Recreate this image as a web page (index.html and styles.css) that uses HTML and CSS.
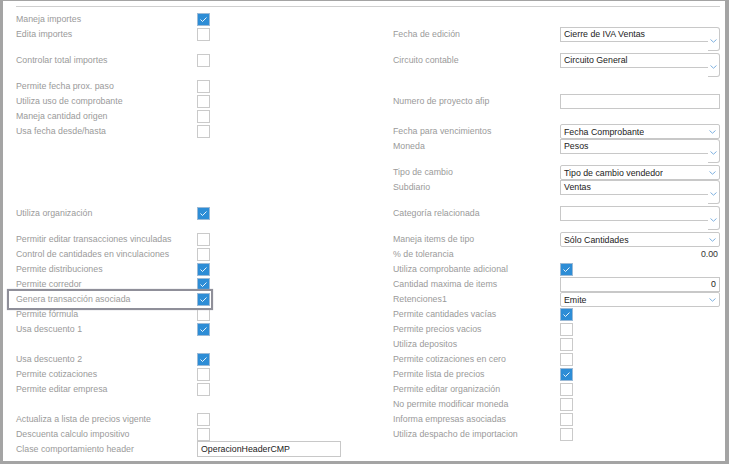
FILE: index.html
```html
<!DOCTYPE html>
<html lang="es">
<head>
    <meta charset="UTF-8">
    <meta name="viewport" content="width=device-width, initial-scale=1.0">
    <title>Configuración de transacción</title>
    <link rel="stylesheet" href="styles.css">
</head>
<body>

<div class="frame">
    <div class="rule"></div>

    <div class="form">
        <div class="row">
            <span class="label">Maneja importes</span><span class="check on"><svg viewBox="0 0 11 11"><polyline points="2.5,5.5 4.5,7.5 8.5,3.5"/></svg></span>
            <span></span><span></span>
        </div>
        <div class="row tall">
            <span class="label">Edita importes</span><span class="check"></span>
            <span class="label">Fecha de edición</span>
            <div class="combo"><span class="value">Cierre de IVA Ventas</span><span class="btn"><svg viewBox="0 0 7 4"><polyline points="0.5,0.5 3.5,3.2 6.5,0.5"/></svg></span></div>
        </div>
        <div class="row tall">
            <span class="label">Controlar total importes</span><span class="check"></span>
            <span class="label">Circuito contable</span>
            <div class="combo"><span class="value">Circuito General</span><span class="btn"><svg viewBox="0 0 7 4"><polyline points="0.5,0.5 3.5,3.2 6.5,0.5"/></svg></span></div>
        </div>
        <div class="row">
            <span class="label">Permite fecha prox. paso</span><span class="check"></span>
            <span></span><span></span>
        </div>
        <div class="row">
            <span class="label">Utiliza uso de comprobante</span><span class="check"></span>
            <span class="label">Numero de proyecto afip</span>
            <span class="field"></span>
        </div>
        <div class="row">
            <span class="label">Maneja cantidad origen</span><span class="check"></span>
            <span></span><span></span>
        </div>
        <div class="row">
            <span class="label">Usa fecha desde/hasta</span><span class="check"></span>
            <span class="label">Fecha para vencimientos</span>
            <div class="select"><span class="value">Fecha Comprobante</span><svg viewBox="0 0 7 4"><polyline points="0.5,0.5 3.5,3.2 6.5,0.5"/></svg></div>
        </div>
        <div class="row tall">
            <span></span><span></span>
            <span class="label">Moneda</span>
            <div class="combo"><span class="value">Pesos</span><span class="btn"><svg viewBox="0 0 7 4"><polyline points="0.5,0.5 3.5,3.2 6.5,0.5"/></svg></span></div>
        </div>
        <div class="row">
            <span></span><span></span>
            <span class="label">Tipo de cambio</span>
            <div class="select"><span class="value">Tipo de cambio vendedor</span><svg viewBox="0 0 7 4"><polyline points="0.5,0.5 3.5,3.2 6.5,0.5"/></svg></div>
        </div>
        <div class="row tall">
            <span></span><span></span>
            <span class="label">Subdiario</span>
            <div class="combo"><span class="value">Ventas</span><span class="btn"><svg viewBox="0 0 7 4"><polyline points="0.5,0.5 3.5,3.2 6.5,0.5"/></svg></span></div>
        </div>
        <div class="row tall">
            <span class="label">Utiliza organización</span><span class="check on"><svg viewBox="0 0 11 11"><polyline points="2.5,5.5 4.5,7.5 8.5,3.5"/></svg></span>
            <span class="label">Categoría relacionada</span>
            <div class="combo"><span class="value"></span><span class="btn"><svg viewBox="0 0 7 4"><polyline points="0.5,0.5 3.5,3.2 6.5,0.5"/></svg></span></div>
        </div>
        <div class="row">
            <span class="label">Permitir editar transacciones vinculadas</span><span class="check"></span>
            <span class="label">Maneja items de tipo</span>
            <div class="select"><span class="value">Sólo Cantidades</span><svg viewBox="0 0 7 4"><polyline points="0.5,0.5 3.5,3.2 6.5,0.5"/></svg></div>
        </div>
        <div class="row">
            <span class="label">Control de cantidades en vinculaciones</span><span class="check"></span>
            <span class="label">% de tolerancia</span>
            <span class="number">0.00</span>
        </div>
        <div class="row">
            <span class="label">Permite distribuciones</span><span class="check on"><svg viewBox="0 0 11 11"><polyline points="2.5,5.5 4.5,7.5 8.5,3.5"/></svg></span>
            <span class="label">Utiliza comprobante adicional</span>
            <span class="check on"><svg viewBox="0 0 11 11"><polyline points="2.5,5.5 4.5,7.5 8.5,3.5"/></svg></span>
        </div>
        <div class="row">
            <span class="label">Permite corredor</span><span class="check on"><svg viewBox="0 0 11 11"><polyline points="2.5,5.5 4.5,7.5 8.5,3.5"/></svg></span>
            <span class="label">Cantidad maxima de items</span>
            <span class="field right">0</span>
        </div>
        <div class="row">
            <span class="label marked">Genera transacción asociada</span><span class="check on"><svg viewBox="0 0 11 11"><polyline points="2.5,5.5 4.5,7.5 8.5,3.5"/></svg></span>
            <span class="label">Retenciones1</span>
            <div class="select"><span class="value">Emite</span><svg viewBox="0 0 7 4"><polyline points="0.5,0.5 3.5,3.2 6.5,0.5"/></svg></div>
        </div>
        <div class="row">
            <span class="label">Permite fórmula</span><span class="check"></span>
            <span class="label">Permite cantidades vacías</span>
            <span class="check on"><svg viewBox="0 0 11 11"><polyline points="2.5,5.5 4.5,7.5 8.5,3.5"/></svg></span>
        </div>
        <div class="row">
            <span class="label">Usa descuento 1</span><span class="check on"><svg viewBox="0 0 11 11"><polyline points="2.5,5.5 4.5,7.5 8.5,3.5"/></svg></span>
            <span class="label">Permite precios vacios</span>
            <span class="check"></span>
        </div>
        <div class="row">
            <span></span><span></span>
            <span class="label">Utiliza depositos</span>
            <span class="check"></span>
        </div>
        <div class="row">
            <span class="label">Usa descuento 2</span><span class="check on"><svg viewBox="0 0 11 11"><polyline points="2.5,5.5 4.5,7.5 8.5,3.5"/></svg></span>
            <span class="label">Permite cotizaciones en cero</span>
            <span class="check"></span>
        </div>
        <div class="row">
            <span class="label">Permite cotizaciones</span><span class="check"></span>
            <span class="label">Permite lista de precios</span>
            <span class="check on"><svg viewBox="0 0 11 11"><polyline points="2.5,5.5 4.5,7.5 8.5,3.5"/></svg></span>
        </div>
        <div class="row">
            <span class="label">Permite editar empresa</span><span class="check"></span>
            <span class="label">Permite editar organización</span>
            <span class="check"></span>
        </div>
        <div class="row">
            <span></span><span></span>
            <span class="label">No permite modificar moneda</span>
            <span class="check"></span>
        </div>
        <div class="row">
            <span class="label">Actualiza a lista de precios vigente</span><span class="check"></span>
            <span class="label">Informa empresas asociadas</span>
            <span class="check"></span>
        </div>
        <div class="row">
            <span class="label">Descuenta calculo impositivo</span><span class="check"></span>
            <span class="label">Utiliza despacho de importacion</span>
            <span class="check"></span>
        </div>
        <div class="row">
            <span class="label">Clase comportamiento header</span>
            <span class="field wide">OperacionHeaderCMP</span>
            <span></span><span></span>
        </div>
    </div>
</div>

</body>
</html>
```

FILE: styles.css
```css
body {
    margin: 0;
    background-color: #ffffff;
    font-family: "Liberation Sans", Arial, sans-serif;
    font-size: 8.8px;
}

.frame {
    width: 729px;
    height: 464px;
    box-sizing: border-box;
    border-style: solid;
    border-color: #a4a4a4;
    border-width: 1px 4px 3px 3px;
    padding: 5px 5px 0 13px;
    background-color: #ffffff;
}

.rule {
    border-top: 1px solid #cfcfcf;
}

.form {
    margin-top: 5px;
}

.row {
    display: grid;
    grid-template-columns: 181px 196px 167px 160px;
    align-items: start;
    height: 15px;
}

.row.tall {
    height: 26px;
}

.label {
    color: #9a9a9a;
    line-height: 15px;
    white-space: nowrap;
    position: relative;
}

/* highlighted row */
.label.marked::after {
    content: "";
    position: absolute;
    left: -9px;
    top: -3px;
    width: 206px;
    height: 21px;
    box-sizing: border-box;
    border: 2px solid #8f8f99;
    box-shadow: 0 0 1px #b4b4bc;
}

.check {
    display: block;
    width: 13px;
    height: 13px;
    margin-top: 1px;
    box-sizing: border-box;
    border: 1px solid #cacaca;
    background-color: #ffffff;
}

.check.on {
    background-color: #2d8dd6;
    border-color: #9cbad6;
}

.check svg {
    display: block;
    width: 11px;
    height: 11px;
    fill: none;
    stroke: #ffffff;
    stroke-width: 0.9;
}

.value {
    color: #222;
    padding-left: 3px;
    white-space: nowrap;
    overflow: hidden;
}

.select {
    display: flex;
    align-items: center;
    justify-content: space-between;
    height: 15px;
    box-sizing: border-box;
    border: 1px solid #c8c8c8;
    border-radius: 2px;
    padding-right: 3px;
}

.select svg,
.btn svg {
    width: 7px;
    height: 4px;
    fill: none;
    stroke: #7eb0df;
    stroke-width: 1;
}

.combo {
    display: flex;
    height: 24px;
}

.combo .value {
    flex: 1;
    height: 15px;
    line-height: 13px;
    box-sizing: border-box;
    border: 1px solid #c8c8c8;
    border-right: 0;
}

.combo .btn {
    width: 12px;
    height: 24px;
    box-sizing: border-box;
    border: 1px solid #c8c8c8;
    border-left: 0;
    border-radius: 0 3px 3px 0;
    padding-top: 11px;
    padding-left: 2px;
}

.btn svg {
    display: block;
}

.field {
    display: block;
    height: 15px;
    box-sizing: border-box;
    border: 1px solid #c8c8c8;
    color: #222;
    line-height: 13px;
    padding: 0 3px;
}

.field.right {
    text-align: right;
}

.field.wide {
    width: 144px;
    height: 16px;
    margin-top: -1px;
    line-height: 14px;
}

.number {
    color: #333;
    text-align: right;
    line-height: 15px;
    padding-right: 2px;
}
```
